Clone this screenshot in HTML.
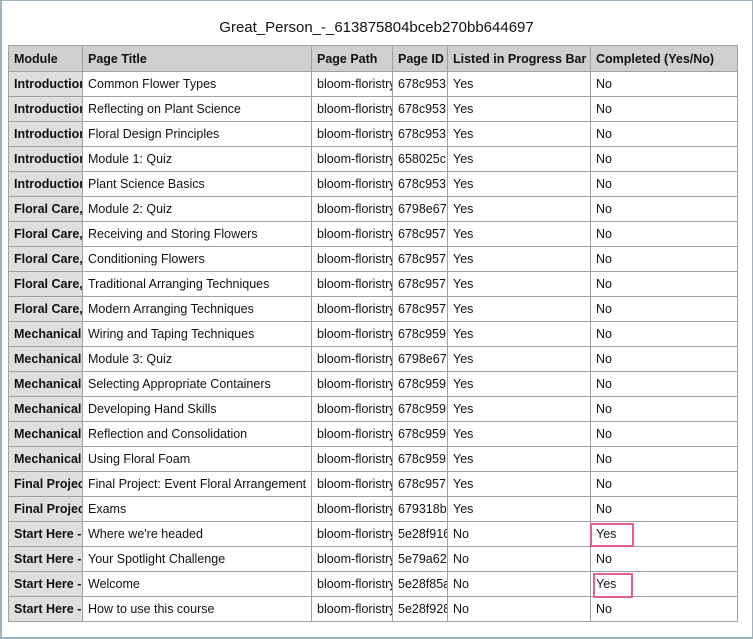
<!DOCTYPE html>
<html><head><meta charset="utf-8"><style>
body{margin:0;width:753px;height:639px;background:#fff;font-family:"Liberation Sans",Arial,sans-serif;overflow:hidden;position:relative}
.frame{position:absolute;left:0;top:0;border:1px solid #9fb3bf;border-left-width:2px;border-bottom-width:2px;box-sizing:border-box;width:753px;height:639px}
h1{position:absolute;top:19px;left:0;width:753px;text-align:center;margin:0;font-weight:normal;font-size:15px;color:#111}
table{position:absolute;left:8px;top:45px;width:729px;border-collapse:collapse;table-layout:fixed;font-size:12.5px;color:#111}
td,th{border:1px solid #a0a0a0;height:24px;padding:0 0 0 5px;overflow:hidden;white-space:nowrap;text-align:left}
th{background:#cfcfcf;font-weight:bold;height:25px}
td:first-child{background:#dedede;font-weight:bold}
.box{position:absolute;border:2px solid #e06090;box-sizing:border-box}
</style></head><body>
<div class="frame"></div>
<h1>Great_Person_-_613875804bceb270bb644697</h1>
<table>
<colgroup><col style="width:74px"><col style="width:229px"><col style="width:81px"><col style="width:55px"><col style="width:143px"><col style="width:147px"></colgroup>
<tr><th>Module</th><th>Page Title</th><th>Page Path</th><th>Page ID</th><th>Listed in Progress Bar</th><th>Completed (Yes/No)</th></tr>
<tr><td>Introduction</td><td>Common Flower Types</td><td>bloom-floristry</td><td>678c953</td><td>Yes</td><td>No</td></tr>
<tr><td>Introduction</td><td>Reflecting on Plant Science</td><td>bloom-floristry</td><td>678c953</td><td>Yes</td><td>No</td></tr>
<tr><td>Introduction</td><td>Floral Design Principles</td><td>bloom-floristry</td><td>678c953</td><td>Yes</td><td>No</td></tr>
<tr><td>Introduction</td><td>Module 1: Quiz</td><td>bloom-floristry</td><td>658025c</td><td>Yes</td><td>No</td></tr>
<tr><td>Introduction</td><td>Plant Science Basics</td><td>bloom-floristry</td><td>678c953</td><td>Yes</td><td>No</td></tr>
<tr><td>Floral Care, </td><td>Module 2: Quiz</td><td>bloom-floristry</td><td>6798e67</td><td>Yes</td><td>No</td></tr>
<tr><td>Floral Care, </td><td>Receiving and Storing Flowers</td><td>bloom-floristry</td><td>678c957</td><td>Yes</td><td>No</td></tr>
<tr><td>Floral Care, </td><td>Conditioning Flowers</td><td>bloom-floristry</td><td>678c957</td><td>Yes</td><td>No</td></tr>
<tr><td>Floral Care, </td><td>Traditional Arranging Techniques</td><td>bloom-floristry</td><td>678c957</td><td>Yes</td><td>No</td></tr>
<tr><td>Floral Care, </td><td>Modern Arranging Techniques</td><td>bloom-floristry</td><td>678c957</td><td>Yes</td><td>No</td></tr>
<tr><td>Mechanical</td><td>Wiring and Taping Techniques</td><td>bloom-floristry</td><td>678c959</td><td>Yes</td><td>No</td></tr>
<tr><td>Mechanical</td><td>Module 3: Quiz</td><td>bloom-floristry</td><td>6798e67</td><td>Yes</td><td>No</td></tr>
<tr><td>Mechanical</td><td>Selecting Appropriate Containers</td><td>bloom-floristry</td><td>678c959</td><td>Yes</td><td>No</td></tr>
<tr><td>Mechanical</td><td>Developing Hand Skills</td><td>bloom-floristry</td><td>678c959</td><td>Yes</td><td>No</td></tr>
<tr><td>Mechanical</td><td>Reflection and Consolidation</td><td>bloom-floristry</td><td>678c959</td><td>Yes</td><td>No</td></tr>
<tr><td>Mechanical</td><td>Using Floral Foam</td><td>bloom-floristry</td><td>678c959</td><td>Yes</td><td>No</td></tr>
<tr><td>Final Project</td><td>Final Project: Event Floral Arrangement</td><td>bloom-floristry</td><td>678c957</td><td>Yes</td><td>No</td></tr>
<tr><td>Final Project</td><td>Exams</td><td>bloom-floristry</td><td>679318b</td><td>Yes</td><td>No</td></tr>
<tr><td>Start Here - </td><td>Where we're headed</td><td>bloom-floristry</td><td>5e28f916</td><td>No</td><td>Yes</td></tr>
<tr><td>Start Here - </td><td>Your Spotlight Challenge</td><td>bloom-floristry</td><td>5e79a62c</td><td>No</td><td>No</td></tr>
<tr><td>Start Here - </td><td>Welcome</td><td>bloom-floristry</td><td>5e28f85a</td><td>No</td><td>Yes</td></tr>
<tr><td>Start Here - </td><td>How to use this course</td><td>bloom-floristry</td><td>5e28f928</td><td>No</td><td>No</td></tr>
</table>
<div class="box" style="left:590px;top:523px;width:44px;height:24px"></div>
<div class="box" style="left:593px;top:573px;width:40px;height:25px"></div>
</body></html>
